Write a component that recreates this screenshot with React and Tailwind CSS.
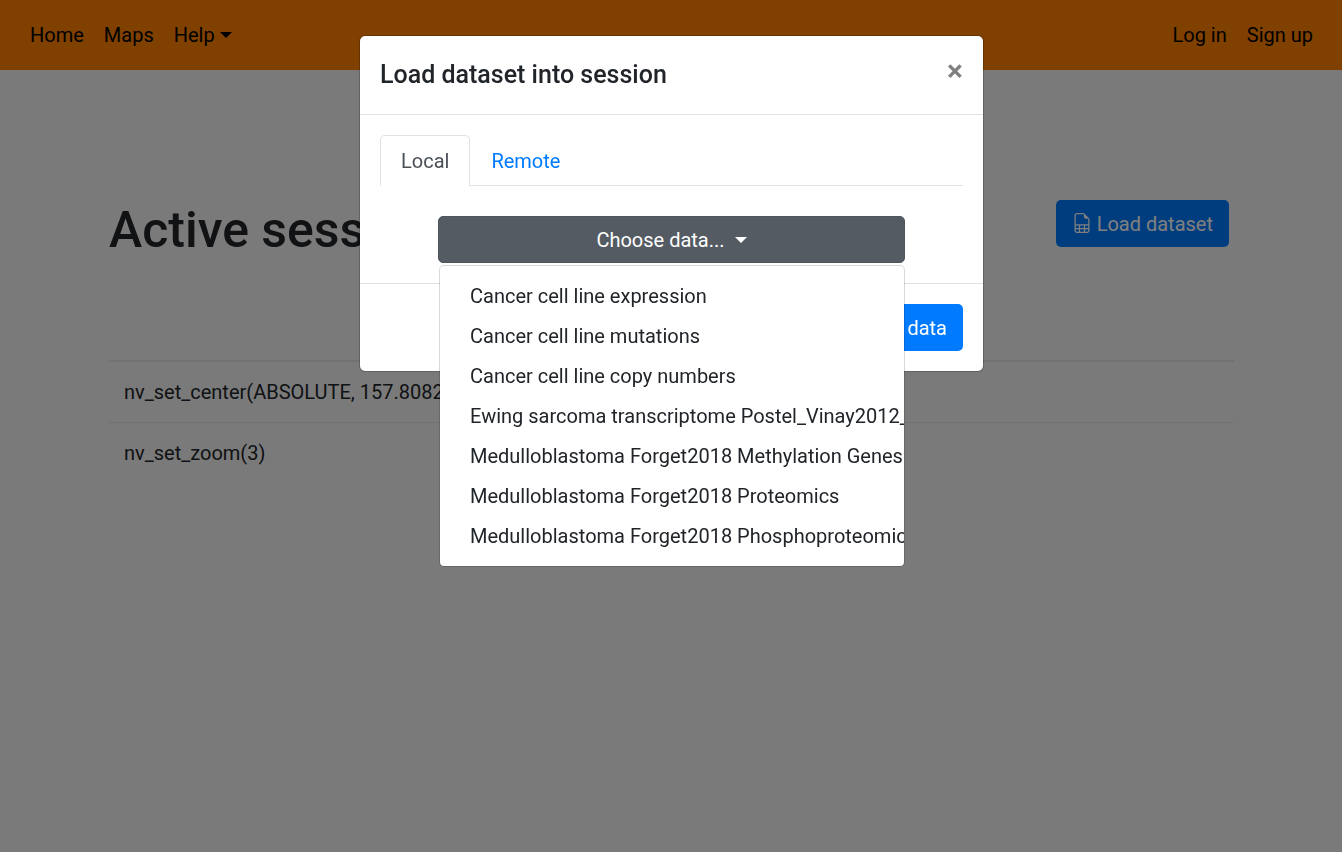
import React from "react";

const datasets = [
  "Cancer cell line expression",
  "Cancer cell line mutations",
  "Cancer cell line copy numbers",
  "Ewing sarcoma transcriptome Postel_Vinay2012_ICA",
  "Medulloblastoma Forget2018 Methylation Genes",
  "Medulloblastoma Forget2018 Proteomics",
  "Medulloblastoma Forget2018 Phosphoproteomics",
];

const commands = ["nv_set_center(ABSOLUTE, 157.8082, 0)", "nv_set_zoom(3)"];

function Caret() {
  return (
    <svg className="h-[6px] w-3 fill-current" viewBox="0 0 12 6" aria-hidden="true">
      <path d="M0 0h12L6 6z" />
    </svg>
  );
}

function SpreadsheetIcon() {
  return (
    <svg className="-mt-[2px] h-5 w-5" viewBox="0 0 16 16" fill="none" stroke="currentColor" aria-hidden="true">
      <path d="M9.500 .5H4A1.500 1.500 0 0 0 2.500 2v12A1.500 1.500 0 0 0 4 15.500h8a1.500 1.500 0 0 0 1.500-1.500V4.500" />
      <path d="M2.500 9.500h11M2.500 12.500h11M6 9.500v6M10 9.500v6" />
      <path d="M9.500 3V0L14 4.500h-3A1.500 1.500 0 0 1 9.500 3z" fill="currentColor" stroke="none" />
    </svg>
  );
}

function Navbar() {
  return (
    <nav className="flex min-h-[70px] items-center justify-between bg-[#ff8000] pr-[29px] pl-[30px] text-black">
      <div className="flex gap-5">
        <a href="#home">Home</a>
        <a href="#maps">Maps</a>
        <button type="button" className="flex items-center gap-[5px]">
          Help <Caret />
        </button>
      </div>
      <div className="flex gap-5">
        <a href="#login">Log in</a>
        <a href="#signup">Sign up</a>
      </div>
    </nav>
  );
}

function Session() {
  return (
    <main className="mx-auto mt-[130px] max-w-[1126px] pl-px">
      <div className="flex items-start justify-between pr-[5px]">
        <h1 className="text-[50px] leading-[60px] font-medium">Active session</h1>
        <button
          type="button"
          className="flex h-[47px] items-center gap-[5px] rounded-[5px] bg-[#007bff] px-4 text-white"
        >
          <SpreadsheetIcon />
          Load dataset
        </button>
      </div>
      <table className="mt-[100px] w-full border-separate border-spacing-0">
        <tbody>
          {commands.map((command, i) => (
            <tr key={command}>
              <td
                className={
                  i === 0
                    ? "border-t-2 border-[#dee2e6] p-[15px]"
                    : "border-t border-[#dee2e6] p-[15px]"
                }
              >
                {command}
              </td>
            </tr>
          ))}
        </tbody>
      </table>
    </main>
  );
}

function DatasetPicker() {
  return (
    <div className="relative mx-[58px] mt-[30px]">
      <button
        type="button"
        aria-expanded="true"
        aria-controls="dataset-menu"
        className="flex h-[47px] w-full items-center justify-center gap-[10px] rounded-[5px] border border-[#4e555b] bg-[#545b62] text-white"
      >
        Choose data... <Caret />
      </button>
      <ul
        id="dataset-menu"
        className="absolute top-full right-0 left-px z-10 mt-[2px] overflow-hidden rounded-[5px] border border-black/15 bg-white bg-clip-padding py-[10px]"
      >
        {datasets.map((name) => (
          <li key={name}>
            <a href="#dataset" className="block px-[30px] py-[5px] whitespace-nowrap">
              {name}
            </a>
          </li>
        ))}
      </ul>
    </div>
  );
}

function LoadDialog() {
  return (
    <div className="fixed inset-0 bg-black/50 pt-[35px] pr-4 pl-[17px]">
      <div
        role="dialog"
        aria-modal="true"
        aria-labelledby="dialog-title"
        className="mx-auto max-w-[625px] rounded-[6px] border border-black/20 bg-white bg-clip-padding"
      >
        <header className="flex items-start justify-between border-b border-[#dee2e6] p-5">
          <h2 id="dialog-title" className="text-[25px] leading-[38px] font-medium">
            Load dataset into session
          </h2>
          <button
            type="button"
            aria-label="Close"
            className="text-[30px] leading-[30px] font-bold text-black/50"
          >
            ×
          </button>
        </header>
        <div className="p-5">
          <div role="tablist" className="flex border-b border-[#dee2e6]">
            <button
              type="button"
              role="tab"
              aria-selected="true"
              className="-mb-px h-[51px] rounded-t-[5px] border border-[#dee2e6] border-b-white bg-white px-5 text-[#495057]"
            >
              Local
            </button>
            <button
              type="button"
              role="tab"
              aria-selected="false"
              className="-mb-px h-[51px] border border-transparent px-5 text-[#007bff]"
            >
              Remote
            </button>
          </div>
          <DatasetPicker />
        </div>
        <footer className="flex justify-end border-t border-[#dee2e6] p-5">
          <button type="button" className="h-[47px] rounded-[5px] bg-[#007bff] px-4 text-white">
            Load data
          </button>
        </footer>
      </div>
    </div>
  );
}

export default function App() {
  return (
    <div className="min-h-screen bg-[#f5f5f5] font-['Roboto',sans-serif] text-[20px] leading-[30px] text-[#212529]">
      <Navbar />
      <Session />
      <LoadDialog />
    </div>
  );
}
